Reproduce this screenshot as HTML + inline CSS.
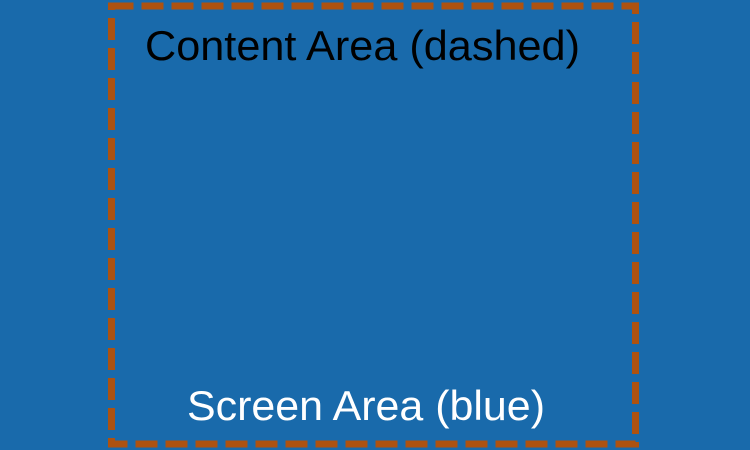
<!DOCTYPE html>
<html><head><style>html,body{margin:0;padding:0;background:#196aab;width:750px;height:450px;overflow:hidden}</style></head>
<body>
<svg width="750" height="450" viewBox="0 0 750 450" xmlns="http://www.w3.org/2000/svg">
<rect width="750" height="450" fill="#196aab"/>
<rect x="111.5" y="6" width="524" height="438" fill="none" stroke="#ad5210" stroke-width="7" stroke-dasharray="22 8"/>
<text x="145" y="60" font-family="Liberation Sans, sans-serif" font-size="42" fill="#000" textLength="435" lengthAdjust="spacingAndGlyphs">Content Area (dashed)</text>
<text x="187" y="420" font-family="Liberation Sans, sans-serif" font-size="42" fill="#fff" textLength="358" lengthAdjust="spacingAndGlyphs">Screen Area (blue)</text>
</svg>
</body></html>
